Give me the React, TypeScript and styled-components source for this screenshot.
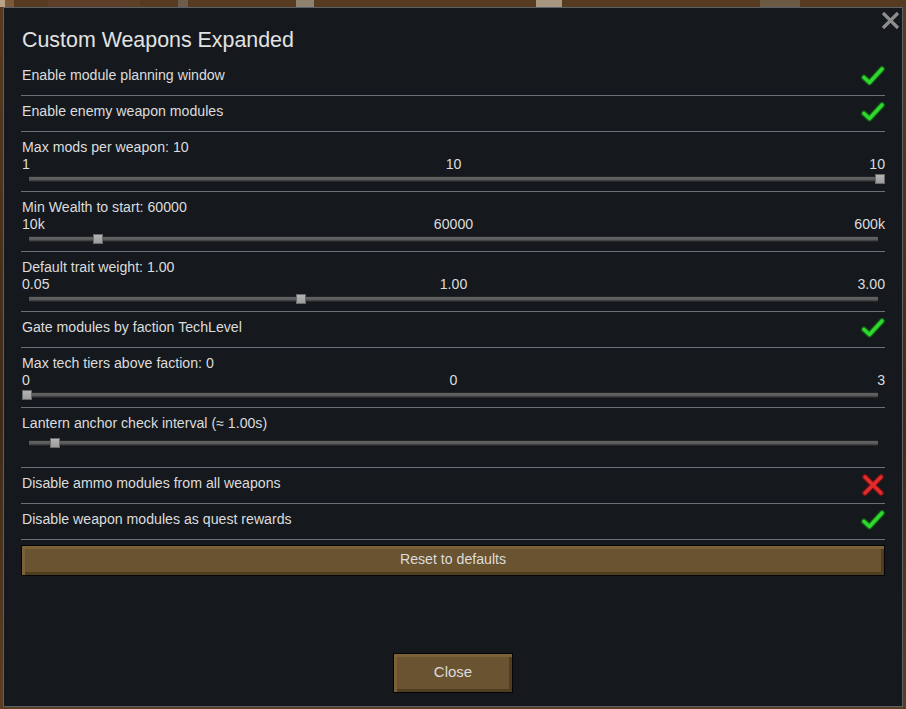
import React from "react";
import styled, { createGlobalStyle } from "styled-components";

const GlobalStyle = createGlobalStyle`
    html, body {
        margin: 0;
        padding: 0;
        width: 906px;
        height: 709px;
        overflow: hidden;
        background: #4b3520;
    }
    body {
        font-family: "Liberation Sans", Arial, sans-serif;
    }
`;

interface SliderSetting {
    kind: "slider";
    label: string;
    scale?: [string, string, string];
    frac: number;
}

interface ToggleSetting {
    kind: "toggle";
    label: string;
    on: boolean;
}

type Setting = SliderSetting | ToggleSetting;

const settings: Setting[] = [
    { kind: "toggle", label: "Enable module planning window", on: true },
    { kind: "toggle", label: "Enable enemy weapon modules", on: true },
    { kind: "slider", label: "Max mods per weapon: 10", scale: ["1", "10", "10"], frac: 1 },
    { kind: "slider", label: "Min Wealth to start: 60000", scale: ["10k", "60000", "600k"], frac: 0.0835 },
    { kind: "slider", label: "Default trait weight: 1.00", scale: ["0.05", "1.00", "3.00"], frac: 0.3215 },
    { kind: "toggle", label: "Gate modules by faction TechLevel", on: true },
    { kind: "slider", label: "Max tech tiers above faction: 0", scale: ["0", "0", "3"], frac: 0 },
    { kind: "slider", label: "Lantern anchor check interval (≈ 1.00s)", frac: 0.033 },
    { kind: "toggle", label: "Disable ammo modules from all weapons", on: false },
    { kind: "toggle", label: "Disable weapon modules as quest rewards", on: true },
];

const CheckMark = () => (
    <svg width="24" height="21" viewBox="0 0 24 21">
        <polyline points="3,12.5 8.5,17.5 21,4" fill="none" stroke="#145c14" strokeWidth="6" strokeLinecap="round" strokeLinejoin="round" />
        <polyline points="3,12.5 8.5,17.5 21,4" fill="none" stroke="#2fd82f" strokeWidth="3.6" strokeLinecap="round" strokeLinejoin="round" />
    </svg>
);

const CrossMark = () => (
    <svg width="24" height="24" viewBox="0 0 24 24">
        <g fill="none" strokeLinecap="round">
            <path d="M4 4 L20 20 M20 4 L4 20" stroke="#6b1212" strokeWidth="6" />
            <path d="M4 4 L20 20 M20 4 L4 20" stroke="#e22b2b" strokeWidth="3.6" />
        </g>
    </svg>
);

const App = () => {
    return (
        <>
            <GlobalStyle />
            <StyledBackdrop>
                <StyledWindow>
                    <StyledCloseX aria-label="close">
                        <svg width="19" height="19" viewBox="0 0 19 19">
                            <path d="M2 2 L17 17 M17 2 L2 17" stroke="#8d8d8d" strokeWidth="3.2" />
                        </svg>
                    </StyledCloseX>
                    <StyledTitle>Custom Weapons Expanded</StyledTitle>
                    <StyledList>
                        {settings.map((s) =>
                            s.kind === "toggle" ? (
                                <StyledToggleRow key={s.label}>
                                    <StyledLabel>{s.label}</StyledLabel>
                                    <StyledIcon>{s.on ? <CheckMark /> : <CrossMark />}</StyledIcon>
                                </StyledToggleRow>
                            ) : (
                                <StyledSliderRow key={s.label} $compact={!s.scale}>
                                    <StyledLabel>{s.label}</StyledLabel>
                                    {s.scale && (
                                        <StyledScale>
                                            <span>{s.scale[0]}</span>
                                            <span>{s.scale[1]}</span>
                                            <span>{s.scale[2]}</span>
                                        </StyledScale>
                                    )}
                                    <StyledSlider>
                                        <StyledTrack />
                                        <StyledThumb style={{ left: `calc(${s.frac} * (100% - 10px))` }} />
                                    </StyledSlider>
                                </StyledSliderRow>
                            ),
                        )}
                    </StyledList>
                    <StyledResetButton>Reset to defaults</StyledResetButton>
                    <StyledFooter>
                        <StyledCloseButton>Close</StyledCloseButton>
                    </StyledFooter>
                </StyledWindow>
            </StyledBackdrop>
        </>
    );
};

const StyledBackdrop = styled.div`
    width: 906px;
    height: 709px;
    box-sizing: border-box;
    padding: 7px 4px 3px 3px;
    background:
        linear-gradient(90deg, #b9a488 0 5px, #7a5a3a 5px 14px, transparent 14px 48px, #5e4029 48px 140px, transparent 140px),
        linear-gradient(90deg, transparent 0 178px, #6d5c4a 178px 188px, transparent 188px 296px, #8f8170 296px 314px, transparent 314px 536px, #a89680 536px 562px, transparent 562px 760px, #6b5a44 760px 800px, transparent 800px),
        linear-gradient(180deg, #573b21, #3f2b18 60%, #5b3f24);
    background-size: 906px 7px, 906px 7px, 906px 709px;
    background-repeat: no-repeat;
`;

const StyledWindow = styled.div`
    position: relative;
    width: 900px;
    height: 700px;
    box-sizing: border-box;
    border: 1px solid #5b6069;
    background: #15191e;
    padding: 18px 17px 13px 17px;
    display: flex;
    flex-direction: column;
    color: #dcdcdc;
`;

const StyledCloseX = styled.div`
    position: absolute;
    top: 3px;
    right: 2px;
    width: 19px;
    height: 19px;
    line-height: 0;
`;

const StyledTitle = styled.h1`
    margin: 0 0 6px 1px;
    font-size: 21.4px;
    font-weight: 400;
    line-height: 28px;
    color: #e2e2e2;
`;

const StyledList = styled.div`
    display: flex;
    flex-direction: column;
`;

const StyledRow = styled.div`
    box-sizing: border-box;
    border-bottom: 1px solid #6d7177;
    padding-top: 6px;
`;

const StyledToggleRow = styled(StyledRow)`
    height: 36px;
    display: flex;
    justify-content: space-between;
    align-items: flex-start;
`;

const StyledSliderRow = styled(StyledRow)<{ $compact: boolean }>`
    height: 60px;
    display: flex;
    flex-direction: column;
    gap: ${(p) => (p.$compact ? "5px" : "0")};
`;

const StyledLabel = styled.div`
    font-size: 14.15px;
    line-height: 18px;
    padding-left: 1px;
`;

const StyledIcon = styled.div`
    margin-top: -1px;
    line-height: 0;
`;

const StyledScale = styled.div`
    display: grid;
    grid-template-columns: 1fr auto 1fr;
    font-size: 14.15px;
    line-height: 17px;
    padding-left: 1px;
    & > span:nth-child(3) {
        text-align: right;
    }
`;

const StyledSlider = styled.div`
    position: relative;
    height: 12px;
    margin: 0 0 0 1px;
`;

const StyledTrack = styled.div`
    position: absolute;
    left: 7px;
    right: 7px;
    top: 3px;
    height: 6px;
    box-sizing: border-box;
    border-radius: 1px;
    background: linear-gradient(180deg, #202224 0, #202224 1px, #626466 1px, #575859 4px, #2c2d2f 5px, #1e1f21 6px);
`;

const StyledThumb = styled.div`
    position: absolute;
    top: 1px;
    width: 10px;
    height: 10px;
    box-sizing: border-box;
    border: 1px solid #6a6a6a;
    background: linear-gradient(180deg, #b4b4b4, #9c9c9c);
`;

const StyledWoodButton = styled.div`
    box-sizing: border-box;
    border: 1px solid #050505;
    background: #6a5330;
    box-shadow:
        inset 3px 3px 0 #7a6137,
        inset -3px -3px 0 #4e3d20;
    color: #dcdcdc;
    display: flex;
    align-items: center;
    justify-content: center;
    padding-bottom: 3px;
`;

const StyledResetButton = styled(StyledWoodButton)`
    margin-top: 5px;
    width: 864px;
    height: 31px;
    font-size: 14.15px;
`;

const StyledFooter = styled.div`
    margin-top: auto;
    display: flex;
    justify-content: center;
`;

const StyledCloseButton = styled(StyledWoodButton)`
    width: 120px;
    height: 40px;
    font-size: 15px;
`;

export default App;
